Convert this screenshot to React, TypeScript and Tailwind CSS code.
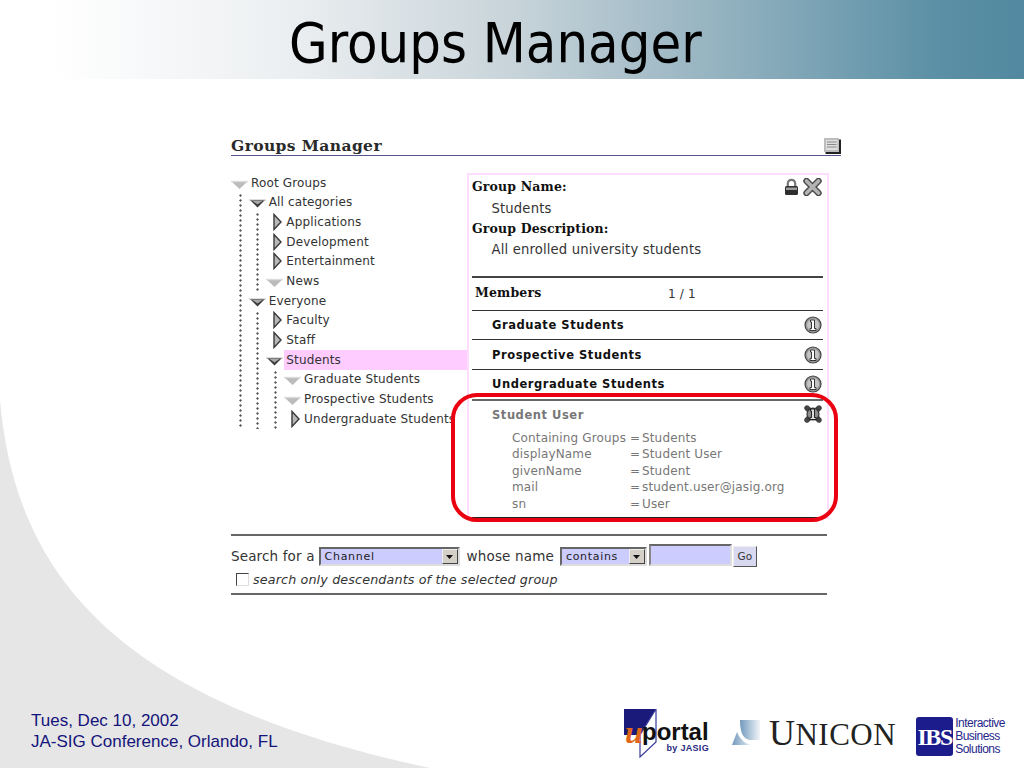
import React from "react";

type Node = {
  label: string;
  icon: "empty" | "open" | "closed";
  selected?: boolean;
  children?: Node[];
};

const TREE: Node = {
  label: "Root Groups",
  icon: "empty",
  children: [
    {
      label: "All categories",
      icon: "open",
      children: [
        { label: "Applications", icon: "closed" },
        { label: "Development", icon: "closed" },
        { label: "Entertainment", icon: "closed" },
        { label: "News", icon: "empty" },
      ],
    },
    {
      label: "Everyone",
      icon: "open",
      children: [
        { label: "Faculty", icon: "closed" },
        { label: "Staff", icon: "closed" },
        {
          label: "Students",
          icon: "open",
          selected: true,
          children: [
            { label: "Graduate Students", icon: "empty" },
            { label: "Prospective Students", icon: "empty" },
            { label: "Undergraduate Students", icon: "closed" },
          ],
        },
      ],
    },
  ],
};

const ATTRIBUTES = [
  ["Containing Groups", "Students"],
  ["displayName", "Student User"],
  ["givenName", "Student"],
  ["mail", "student.user@jasig.org"],
  ["sn", "User"],
];

const TreeIcon = ({ type }: { type: Node["icon"] }) => {
  if (type === "closed") {
    return (
      <svg width="17" height="18" viewBox="0 0 17 18" className="shrink-0">
        <path d="M8 1.5 L15 9 L8 16.5 Z" fill="#b8b8b8" stroke="#3a3a3a" strokeWidth="1.4" />
      </svg>
    );
  }
  if (type === "open") {
    return (
      <svg width="17" height="18" viewBox="0 0 17 18" className="shrink-0">
        <path d="M1 7 H16 L8.5 14.5 Z" fill="#3a3a3a" />
        <path d="M3.5 8 H13.5 L8.5 11.5 Z" fill="#a8a8a8" />
        <path d="M0 7 H17" stroke="#bbb" strokeWidth="1" />
      </svg>
    );
  }
  return (
    <svg width="17" height="18" viewBox="0 0 17 18" className="shrink-0">
      <path d="M0.5 7.5 H16.5 L8.5 15 Z" fill="#bcbcbc" />
      <path d="M0 7.5 H17" stroke="#dcdcdc" strokeWidth="1.4" />
    </svg>
  );
};

const TreeBranch = ({ node }: { node: Node }) => (
  <div>
    <div className="flex h-[19.67px] items-center">
      <TreeIcon type={node.icon} />
      <span
        className={
          node.selected
            ? "ml-[1px] flex h-full flex-1 items-center bg-[#ffccff] pl-[2px]"
            : "ml-[3px] whitespace-nowrap"
        }
      >
        {node.label}
      </span>
    </div>
    {node.children && (
      <div className="flex">
        <div className="w-[17.67px] shrink-0 bg-[radial-gradient(circle,#555_0.8px,transparent_1.5px)] bg-[length:5px_5px] bg-repeat-y bg-[position:6.5px_0]" />
        <div className="min-w-0 flex-1">
          {node.children.map((child) => (
            <TreeBranch key={child.label} node={child} />
          ))}
        </div>
      </div>
    )}
  </div>
);

const InfoIcon = () => (
  <svg width="18" height="18" viewBox="0 0 18 18">
    <circle cx="9" cy="9" r="8" fill="#9a9a9a" stroke="#444" strokeWidth="1.2" />
    <circle cx="9" cy="9" r="6" fill="#c4c4c4" />
    <path d="M6.5 4 H10.5 V12.5 H12 V14.5 H6 V12.5 H7.5 V6 H6.5 Z" fill="#fff" stroke="#222" strokeWidth="0.9" />
  </svg>
);

const CrossIcon = () => (
  <svg width="19" height="18" viewBox="0 0 19 18">
    <path d="M3.5 3 L15.5 15 M15.5 3 L3.5 15" stroke="#4a4a4a" strokeWidth="6.4" strokeLinecap="round" />
    <path d="M3.5 3 L15.5 15 M15.5 3 L3.5 15" stroke="#b4b4b4" strokeWidth="3.6" strokeLinecap="round" />
  </svg>
);

const LockIcon = () => (
  <svg width="15" height="18" viewBox="0 0 15 18">
    <path d="M3.8 9 V5.5 a3.7 3.7 0 0 1 7.4 0 V9" fill="none" stroke="#777" strokeWidth="2.2" />
    <rect x="1" y="8" width="13" height="9" rx="1.5" fill="#2e2e2e" />
    <rect x="2" y="9.5" width="11" height="2.5" fill="#9a9a9a" />
  </svg>
);

const RemoveInfoIcon = () => (
  <svg width="18" height="18" viewBox="0 0 18 18" className="mt-[-2px]">
    <path d="M3 3 L15 15 M15 3 L3 15" stroke="#444" strokeWidth="5.4" strokeLinecap="round" />
    <circle cx="9" cy="9" r="6" fill="#8d8d8d" stroke="#333" strokeWidth="1.2" />
    <path d="M6.5 4 H10.5 V12.5 H12 V14.5 H6 V12.5 H7.5 V6 H6.5 Z" fill="#ddd" stroke="#111" strokeWidth="0.9" />
  </svg>
);

const ListIcon = () => (
  <svg width="17" height="16" viewBox="0 0 17 16">
    <rect x="1.5" y="1.5" width="15.5" height="14.5" fill="#222" />
    <rect x="0" y="0" width="15" height="14" fill="#bdbdbd" />
    <rect x="2" y="2" width="11.5" height="10" fill="#dedede" />
    <path d="M3 4 H12.5 M3 6.5 H12.5 M3 9 H12.5" stroke="#8a8a8a" strokeWidth="1" />
  </svg>
);

const Member = ({ label }: { label: string }) => (
  <div className="flex h-[29.67px] items-center justify-between border-t-[1.5px] border-[#333] pl-[20px] pr-[1px]">
    <span className="pt-[1px] text-[11.5px] font-bold tracking-[0.55px] text-[#111]">{label}</span>
    <InfoIcon />
  </div>
);

const SelectBox = ({ label, width }: { label: string; width: string }) => (
  <div
    className={`${width} flex h-[19px] items-center justify-between border-2 border-b-[#ddd] border-l-[#666] border-r-[#ddd] border-t-[#666] bg-[#ccccff] pl-[4px] text-[11px] tracking-[0.7px] text-[#222]`}
  >
    <span className="pt-[1px]">{label}</span>
    <span className="flex h-[15px] w-[16px] items-center justify-center border border-b-[#444] border-l-[#eee] border-r-[#444] border-t-[#eee] bg-[#d4d0c8]">
      <svg width="7" height="4" viewBox="0 0 7 4">
        <path d="M0 0 H7 L3.5 4 Z" fill="#111" />
      </svg>
    </span>
  </div>
);

const Footer = () => (
  <footer className="relative mt-auto flex items-end justify-between pb-[11px] pl-[31px] pr-[19px]">
    <div className="mb-[5px] text-[17px] leading-[21px] text-[#14147a]">
      <p>Tues, Dec 10, 2002</p>
      <p>JA-SIG Conference, Orlando, FL</p>
    </div>
    <div className="flex items-end">
      {/* uPortal */}
      <div className="relative h-[48px] w-[87px]">
        <svg width="36" height="49" viewBox="0 0 36 49" className="absolute left-0 top-0">
          <path d="M1 0 H33 L17 26 H1 Z" fill="#1a1a7a" />
          <path d="M33 0 V33 L17 48 V26 Z" fill="#fff" stroke="#3a3a9a" strokeWidth="1.2" />
        </svg>
        <span className="absolute left-[2px] top-[7px] font-['Liberation_Serif'] text-[32px] font-bold italic leading-none text-[#e0661a]">
          u
        </span>
        <span className="absolute left-[19px] top-[13px] text-[24px] font-bold leading-[20px] text-[#111]">
          portal
        </span>
        <span className="absolute right-[1px] top-[35px] text-[9px] font-bold leading-none tracking-[0.3px] text-[#2a2a80]">
          by JASIG
        </span>
      </div>
      {/* Unicon */}
      <div className="mb-[6px] ml-[22px] flex items-center">
        <svg width="28" height="26" viewBox="0 0 28 26">
          <defs>
            <linearGradient id="uni" x1="0" y1="0" x2="1" y2="0">
              <stop offset="0" stopColor="#7199bd" />
              <stop offset="1" stopColor="#f2f5f8" />
            </linearGradient>
          </defs>
          <path d="M8 0 H28 V20 H19 C12 20 8 14 8 0 Z" fill="url(#uni)" />
          <path d="M0 25 L5 12 C8 20 14 24 20 25 Z" fill="url(#uni)" />
        </svg>
        <span className="ml-[9px] font-['Liberation_Serif'] text-[36px] leading-none tracking-[0.5px] text-[#222]">
          U<span className="text-[31px]">NICON</span>
        </span>
      </div>
      {/* IBS */}
      <div className="mb-[1px] ml-[20px] flex items-center">
        <div className="flex h-[39px] w-[37px] items-center justify-center rounded-[3px] bg-[#1c1c8c] font-['Liberation_Serif'] text-[24px] font-bold leading-none tracking-[-1.5px] text-white">
          IBS
        </div>
        <div className="ml-[2px] text-[12px] leading-[13px] tracking-[-0.5px] text-[#26268a]">
          <p>Interactive</p>
          <p>Business</p>
          <p>Solutions</p>
        </div>
      </div>
    </div>
  </footer>
);

const App = () => {
  return (
    <div className="relative flex h-[768px] w-[1024px] flex-col overflow-hidden bg-white font-['Liberation_Sans',sans-serif]">
      <svg width="1024" height="768" viewBox="0 0 1024 768" className="absolute left-0 top-0">
        <path d="M0 400 C15 570 110 700 430 768 L0 768 Z" fill="#e6e6e6" />
      </svg>

      <header className="relative h-[79px] bg-[linear-gradient(90deg,#ffffff_5%,#eceff1_28%,#c8d4da_50%,#9ab6c3_68%,#5a8fa5_92%,#5389a0_100%)] pl-[289px]">
        <h1 className="font-['DejaVu_Sans_Condensed','DejaVu_Sans',sans-serif] text-[55.5px] leading-[86px] text-black">
          Groups Manager
        </h1>
      </header>

      <main className="relative ml-[231px] mt-[57px] w-[610px] font-['DejaVu_Sans',sans-serif] text-[12px] tracking-[0.15px] text-[#333]">
        <div className="flex h-[20px] items-center justify-between border-b border-[#55558a]">
          <h2 className="font-['DejaVu_Serif',serif] text-[15.5px] font-bold tracking-[0.4px] text-[#2a2a2a]">
            Groups Manager
          </h2>
          <ListIcon />
        </div>

        <div className="mt-[17px] flex">
          <div className="w-[236px] shrink-0">
            <TreeBranch node={TREE} />
          </div>
          <div className="h-[346px] w-[362px] border-2 border-[#ffddff] pl-[3px] pr-[4px] pt-[2px]">
            <div className="flex justify-between pr-[1px]">
              <div className="leading-[20.67px]">
                <p className="font-['DejaVu_Serif',serif] text-[12.5px] font-bold text-[#111]">Group Name:</p>
                <p className="pl-[19.5px] pt-[1px] text-[13.2px]">Students</p>
                <p className="font-['DejaVu_Serif',serif] text-[12.5px] font-bold text-[#111]">Group Description:</p>
                <p className="pl-[19.5px] text-[13.2px]">All enrolled university students</p>
              </div>
              <div className="flex h-[20px] items-center gap-[4px]">
                <LockIcon />
                <CrossIcon />
              </div>
            </div>
            <div className="mt-[15px] flex h-[34px] items-center border-t-2 border-[#444] pl-[3px]">
              <span className="w-[193px] font-['DejaVu_Serif',serif] text-[12.5px] font-bold text-[#111]">Members</span>
              <span className="pt-[1px]">1 / 1</span>
            </div>
            <Member label="Graduate Students" />
            <Member label="Prospective Students" />
            <Member label="Undergraduate Students" />
            <div className="border-b-2 border-t-2 border-b-[#222] border-t-[#666] pb-[5px] text-[#777]">
              <div className="flex h-[29px] items-center justify-between pl-[20px] pr-[1px]">
                <span className="text-[11.5px] font-bold tracking-[0.55px]">Student User</span>
                <RemoveInfoIcon />
              </div>
              <div className="grid grid-cols-[118px_12px_1fr] pl-[40px] leading-[16.5px]">
                {ATTRIBUTES.map(([name, value]) => (
                  <React.Fragment key={name}>
                    <span>{name}</span>
                    <span>=</span>
                    <span>{value}</span>
                  </React.Fragment>
                ))}
              </div>
            </div>
          </div>
        </div>

        <div className="mt-[15px] h-[61px] w-[596px] border-b-2 border-t-2 border-[#666] text-[13.5px]">
          <div className="mt-[10px] flex items-center">
            <span className="mr-[4px]">Search for a</span>
            <SelectBox label="Channel" width="w-[141px]" />
            <span className="ml-[7px] mr-[6px]">whose name</span>
            <SelectBox label="contains" width="w-[87px]" />
            <div className="ml-[2px] mt-[-3px] h-[22px] w-[83px] border-2 border-b-[#ddd] border-l-[#888] border-r-[#ddd] border-t-[#666] bg-[#ccccff]" />
            <div className="ml-[1px] flex h-[21px] w-[24px] items-center justify-center border border-b-[#555] border-l-[#eee] border-r-[#555] border-t-[#eee] bg-[#d8d8f0] text-[10.5px]">
              Go
            </div>
          </div>
          <div className="mt-[3px] flex items-center pl-[5px] text-[12.7px] italic">
            <span className="mr-[4px] h-[13px] w-[13px] border border-b-[#ddd] border-l-[#444] border-r-[#ddd] border-t-[#444]" />
            search only descendants of the selected group
          </div>
        </div>

        <div className="absolute left-[220px] top-[257px] h-[129px] w-[387px] rounded-[26px] border-4 border-[#ea0010]" />
      </main>

      <Footer />
    </div>
  );
};

export default App;
